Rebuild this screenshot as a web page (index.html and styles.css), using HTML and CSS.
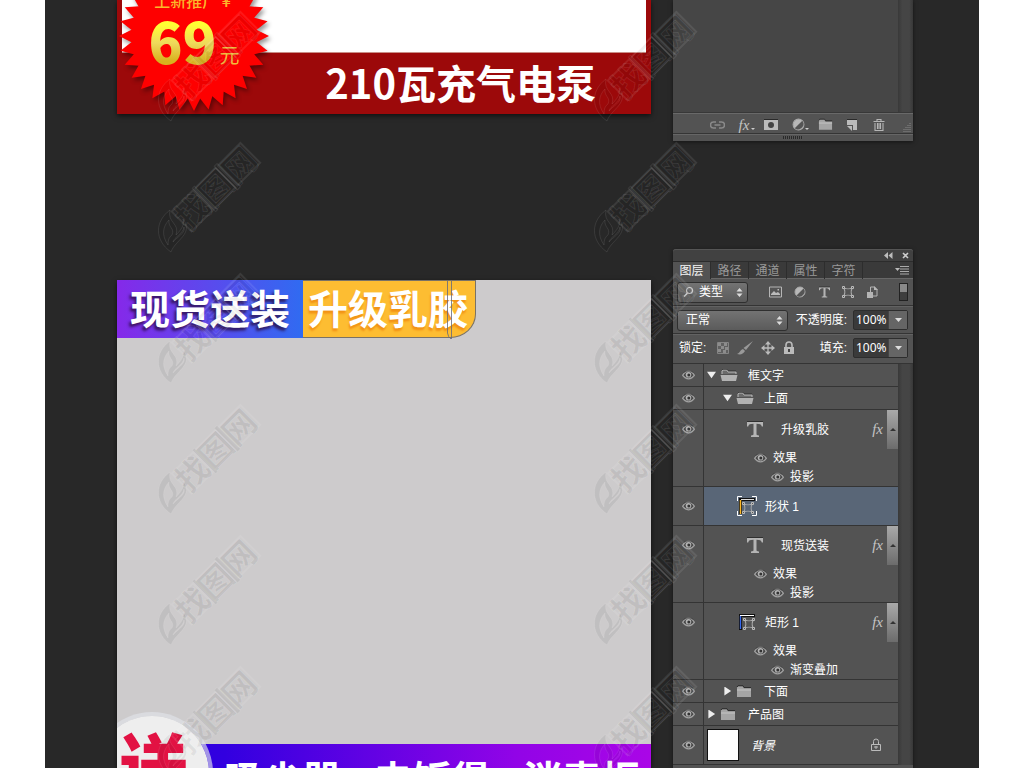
FILE: index.html
```html
<!DOCTYPE html>
<html lang="zh-CN">
<head>
<meta charset="utf-8">
<title>图层</title>
<link rel="stylesheet" href="styles.css">
</head>
<body>
<svg class="sprite" aria-hidden="true">
  <defs>
    <symbol id="eye" viewBox="0 0 13 10"><path d="M.7 5.400C2.600 2 4.400 1.200 6.500 1.200S10.600 2 12.300 5.400C10.600 8 8.800 8.800 6.500 8.800S2.500 8 .7 5.400Z" fill="#454545" stroke="#a0a0a0" stroke-width="1.300"/><circle cx="6.500" cy="4.800" r="2.800" fill="#b4b4b4"/><circle cx="6.800" cy="5" r="1.500" fill="#333"/><path d="M1 3.300C3 .2 10 .2 12 3.300" fill="none" stroke="#2d2d2d" stroke-width=".6"/></symbol>
    <symbol id="folder" viewBox="0 0 16 13"><path d="M1 12V2.500L2 1h5l1 2h7v9Z" fill="#a5a5a5"/><path d="M1 2 2 .8h5L8 2.600h7" fill="none" stroke="#2a2a2a"/><path d="M1 4h14v2H1z" fill="#b5b5b5"/></symbol>
    <symbol id="open" viewBox="0 0 18 13"><path d="M2 5V2l1-1h4l1 2h8v2" fill="#6b6b6b" stroke="#bbb"/><path d="M2 1 3 .3h4l1 1.500h8" fill="none" stroke="#2a2a2a" stroke-width=".6"/><path d="M.5 6h17L16 12H2Z" fill="#b2b2b2"/></symbol>
    <symbol id="tee" viewBox="0 0 16 16"><path d="M0 1h16v4.500h-1.200C14.300 3.300 13 2.700 9.500 2.700V13c0 1 .7 1.300 2.500 1.400V16H4v-1.600C5.800 14.300 6.500 14 6.500 13V2.700C3 2.700 1.700 3.300 1.200 5.500H0Z" fill="#b4b4b4"/><path d="M0 .5h16" stroke="#303030"/></symbol>
    <symbol id="node" viewBox="0 0 12 12"><path d="M2 2C4 3 8 3 10 2C9 4 9 8 10 10C8 9 4 9 2 10C3 8 3 4 2 2Z" fill="none" stroke="#aaa" stroke-width="1.200"/><path d="M.5 .5h2v2h-2zM9.500 .5h2v2h-2zM.5 9.500h2v2h-2zM9.500 9.500h2v2h-2z" fill="#555" stroke="#bbb"/></symbol>
    <symbol id="half" viewBox="0 0 12 12"><circle cx="6" cy="6" r="5" fill="#b8b8b8" stroke="#a8a8a8"/><path d="M9.500 2.500A5 5 0 0 1 2.500 9.500Z" fill="#555"/></symbol>
    <symbol id="lock" viewBox="0 0 12 14"><path d="M3 7V4a3 3 0 0 1 6 0v3" fill="none" stroke="#bbb" stroke-width="1.600"/><rect x="1" y="6" width="10" height="7" fill="#bbb"/><path d="M6 8v3" stroke="#444" stroke-width="2"/></symbol>
    <symbol id="mark" viewBox="0 0 110 120">
      <g stroke="#fff" stroke-opacity=".09" fill="#000" fill-opacity=".06">
        <path fill-rule="evenodd" d="M14 116C-3 104-2 85 13 74C10 87 23 87 19 99C27 91 27 87 26 83C37 98 18 104 14 116ZM11 109C4 99 6 90 12 84C11 92 18 92 15 99C12 101 11 104 11 109ZM16 106C17 101 26 98 27 91C29 97 20 101 16 106Z"/>
        <g transform="translate(36 94) rotate(-45)">
          <path d="M-2 0V-28H28V0ZM30 0V-28H60V0ZM63 0V-28H95V0Z" fill="none" stroke-width="2"/>
          <path d="M60-30h4V3h-4zM29-30h3V3h-3z"/>
          <text class="mark-text" x="-4" y="-1">找图网</text>
        </g>
      </g>
    </symbol>
  </defs>
</svg>

<main class="workspace">
  <section class="boards">
    <article class="board board-red">
      <div class="photo"></div>
      <h2 class="pump">210瓦充气电泵</h2>
      <div class="burst">
        <svg class="burst-shape" viewBox="-80 -80 160 160" aria-hidden="true">
          <defs>
            <path id="spike" d="M56-8 62-6.500 75 0 62 6.500 56 8Z"/>
            <g id="spikes"><use href="#spike"/><use href="#spike" transform="rotate(11.25)"/><use href="#spike" transform="rotate(22.5)"/><use href="#spike" transform="rotate(33.75)"/></g>
            <g id="quarter"><use href="#spikes"/><use href="#spikes" transform="rotate(45)"/></g>
          </defs>
          <g fill="#fe0000"><circle r="62"/><use href="#quarter"/><use href="#quarter" transform="rotate(90)"/><use href="#quarter" transform="rotate(180)"/><use href="#quarter" transform="rotate(270)"/></g>
        </svg>
        <p class="burst-top">上新推广 ¥</p>
        <p class="burst-price"><strong>69</strong><span>元</span></p>
      </div>
    </article>
    <article class="board board-grey">
      <div class="tags">
        <span class="tag tag-blue">现货送装</span>
        <span class="tag tag-gold">升级乳胶
          <svg class="tag-path" viewBox="0 0 30 58" aria-hidden="true"><path d="M1.500 0V52Q2 56 5 58M5.500 0V58" fill="none" stroke="#62677c" stroke-width=".8"/></svg>
        </span>
      </div>
      <div class="gift-bar"><span>吸尘器</span><span>电饭煲</span><span>消毒柜</span></div>
      <div class="gift"><span>送</span></div>
    </article>
  </section>

  <aside class="panels">
    <section class="panel panel-upper">
      <div class="panel-body"><div class="track"></div></div>
      <footer class="tools">
        <button class="tool" aria-label="链接图层"><svg width="15" height="14" viewBox="0 0 15 14"><path d="M6 4H3.500a3 3 0 0 0 0 6H6M9 4h2.500a3 3 0 0 1 0 6H9M4.500 7h6" fill="none" stroke="#8a8a8a" stroke-width="1.500"/></svg></button>
        <button class="tool fx" aria-label="图层样式">fx<i class="dot"></i></button>
        <button class="tool" aria-label="添加蒙版"><svg width="14" height="14" viewBox="0 0 14 14"><path d="M0 2h14v10H0z" fill="#bbb"/><path d="M0 1.500h14" stroke="#2a2a2a"/><circle cx="7" cy="7" r="3" fill="#444"/></svg></button>
        <button class="tool" aria-label="调整图层"><svg width="13" height="13"><use href="#half"/></svg><i class="dot"></i></button>
        <button class="tool" aria-label="新建组"><svg width="15" height="13"><use href="#folder"/></svg></button>
        <button class="tool" aria-label="新建图层"><svg width="14" height="14" viewBox="0 0 14 14"><path d="M2 2h10v10H8V7H2Z" fill="#bbb"/><path d="M2 1.500h10" stroke="#2a2a2a"/><path d="M2 8h5v5Z" fill="#bbb"/></svg></button>
        <button class="tool" aria-label="删除"><svg width="14" height="14" viewBox="0 0 14 14"><path d="M1.500 3.500h11M5 3V1.500h4V3M3 5v7.500h8V5M5.500 5v6M7 5v6M8.500 5v6" fill="none" stroke="#b5b5b5" stroke-width="1.100"/></svg></button>
        <svg class="grip" width="10" height="10" viewBox="0 0 10 10"><path d="M8 1v9M6 3v7M4 5v5M2 7v3" stroke="#888" stroke-dasharray="1 1"/></svg>
      </footer>
      <div class="resize"><i></i></div>
    </section>

    <section class="panel panel-layers">
      <header class="title">
        <button aria-label="折叠"><svg width="9" height="7" viewBox="0 0 9 7"><path d="M4 0v7L0 3.500ZM8.500 0v7l-4-3.500Z" fill="#bdbdbd"/></svg></button>
        <button aria-label="关闭"><svg width="7" height="7" viewBox="0 0 7 7"><path d="m1 1 5 5M6 1 1 6" stroke="#ccc" stroke-width="1.600"/></svg></button>
      </header>
      <nav class="tabs">
        <button class="tab tab-on">图层</button><button class="tab">路径</button><button class="tab">通道</button><button class="tab">属性</button><button class="tab">字符</button>
        <button class="menu" aria-label="菜单"><svg width="14" height="9" viewBox="0 0 14 9"><path d="M0 2h5L2.500 5Z" fill="#bbb"/><path d="M5 .5h9M5 3h9M5 5.500h9M5 8h9" stroke="#aaa"/></svg></button>
      </nav>
      <div class="bar filter">
        <div class="pick pick-kind">
          <svg width="11" height="12" viewBox="0 0 11 12"><circle cx="6.500" cy="4.500" r="3" fill="none" stroke="#ccc" stroke-width="1.200"/><path d="M4.500 7 1 10.500" stroke="#ccc" stroke-width="1.500"/></svg>
          <select aria-label="过滤类型"><option>类型</option></select>
          <svg width="7" height="9" viewBox="0 0 7 9"><path d="M3.500 0 6.500 3.500h-6ZM3.500 9l3-3.500h-6Z" fill="#ddd"/></svg>
        </div>
        <div class="kinds">
          <button aria-label="像素"><svg width="13" height="12" viewBox="0 0 13 12"><path d="M.5 1h12v10H.5z" fill="#555" stroke="#b5b5b5"/><path d="M2 9V8l3-3 2 2 2-1 2 2v1ZM8.500 3h1.500v1.500H8.500z" fill="#bbb"/></svg></button>
          <button aria-label="调整"><svg width="12" height="12"><use href="#half"/></svg></button>
          <button aria-label="文字"><svg width="11" height="12"><use href="#tee"/></svg></button>
          <button aria-label="形状"><svg width="12" height="12"><use href="#node"/></svg></button>
          <button aria-label="智能对象"><svg width="12" height="13" viewBox="0 0 12 13"><path d="M4.500 6V1h4L11 3.500V10H7" fill="#555" stroke="#b5b5b5"/><path d="M8 0v4h4M1 6h6v6H1z" fill="#b5b5b5"/></svg></button>
        </div>
        <button class="switch" aria-label="过滤开关"></button>
      </div>
      <div class="bar">
        <div class="pick pick-mode">
          <select aria-label="混合模式"><option>正常</option></select>
          <svg width="7" height="9" viewBox="0 0 7 9"><path d="M3.500 0 6.500 3.500h-6ZM3.500 9l3-3.500h-6Z" fill="#ddd"/></svg>
        </div>
        <label class="end" for="opacity">不透明度:</label>
        <span class="number"><input id="opacity" value="100%"><button aria-label="调整不透明度"><svg width="7" height="4"><path d="M0 0h7L3.500 4Z" fill="#ddd"/></svg></button></span>
      </div>
      <div class="bar bar-lock">
        <span>锁定:</span>
        <div class="locks">
          <button aria-label="透明像素"><svg width="12" height="12" viewBox="0 0 12 12"><path d="M.5 .5h11v11H.5z" fill="#606060" stroke="#858585"/><path d="M1 1h3v3H1zM7 1h3v3H7zM4 4h3v3H4zM8 5h3v3H8zM1 7h3v3H1zM6 8h3v3H6z" fill="#8c8c8c"/></svg></button>
          <button aria-label="图像像素"><svg width="16" height="14" viewBox="0 0 16 14"><path d="M16 0 9 9 6.500 7ZM6 8l2 2c-2 3-4 4-8 3 3-1 3-4 6-5Z" fill="#999"/></svg></button>
          <button aria-label="位置"><svg width="14" height="14" viewBox="0 0 14 14"><path d="M7 1v12M1 7h12" stroke="#bbb" stroke-width="1.300"/><path d="m7 0 3 3.500H4ZM7 14l3-3.500H4ZM0 7l3.500-3v6ZM14 7l-3.500-3v6Z" fill="#bbb"/></svg></button>
          <button aria-label="全部"><svg width="12" height="14"><use href="#lock"/></svg></button>
        </div>
        <label class="end" for="fill">填充:</label>
        <span class="number"><input id="fill" value="100%"><button aria-label="调整填充"><svg width="7" height="4"><path d="M0 0h7L3.500 4Z" fill="#ddd"/></svg></button></span>
      </div>
      <div class="scroller">
        <ul class="layers">
          <li class="layer"><button class="eye" aria-label="可见"><svg><use href="#eye"/></svg></button><div class="info"><div class="line"><i class="arrow down"></i><svg class="ico" width="18" height="13"><use href="#open"/></svg><span class="name">框文字</span></div></div></li>
          <li class="layer"><button class="eye" aria-label="可见"><svg><use href="#eye"/></svg></button><div class="info"><div class="line nested"><i class="arrow down"></i><svg class="ico" width="18" height="13"><use href="#open"/></svg><span class="name">上面</span></div></div></li>
          <li class="layer tall"><button class="eye" aria-label="可见"><svg><use href="#eye"/></svg></button><div class="info"><div class="line item"><svg width="16" height="16"><use href="#tee"/></svg><span class="name">升级乳胶</span><span class="fx">fx</span><button class="fold" aria-label="折叠效果"></button></div><div class="effect"><svg><use href="#eye"/></svg>效果</div><div class="effect effect-sub"><svg><use href="#eye"/></svg>投影</div></div></li>
          <li class="layer tall selected"><button class="eye" aria-label="可见"><svg><use href="#eye"/></svg></button><div class="info"><div class="line shape"><svg width="20" height="20" viewBox="0 0 20 20"><path d="M.5 5V.5H5M15 .5h4.500V5M.5 15v4.500H5M15 19.500h4.500V15" fill="none" stroke="#fff"/><path d="M2 2h16v3H5v13H2z" fill="#111"/><path d="M3.500 4v14" stroke="#fbb829" stroke-width="1.500"/><path d="M4 3.500h13" stroke="#ddd"/><use href="#node" x="5" y="6" width="12" height="12"/></svg><span class="name">形状 1</span></div></div></li>
          <li class="layer tall"><button class="eye" aria-label="可见"><svg><use href="#eye"/></svg></button><div class="info"><div class="line item"><svg width="16" height="16"><use href="#tee"/></svg><span class="name">现货送装</span><span class="fx">fx</span><button class="fold" aria-label="折叠效果"></button></div><div class="effect"><svg><use href="#eye"/></svg>效果</div><div class="effect effect-sub"><svg><use href="#eye"/></svg>投影</div></div></li>
          <li class="layer tall"><button class="eye" aria-label="可见"><svg><use href="#eye"/></svg></button><div class="info"><div class="line shape"><svg width="20" height="20" viewBox="0 0 20 20"><path d="M2 2h16v3H5v13H2z" fill="#111"/><path d="M3.500 4v13" stroke="#3569f0" stroke-width="1.300"/><path d="M3 3.500h14" stroke="#fff"/><use href="#node" x="6" y="6" width="12" height="12"/></svg><span class="name">矩形 1</span><span class="fx">fx</span><button class="fold" aria-label="折叠效果"></button></div><div class="effect"><svg><use href="#eye"/></svg>效果</div><div class="effect effect-sub"><svg><use href="#eye"/></svg>渐变叠加</div></div></li>
          <li class="layer"><button class="eye" aria-label="可见"><svg><use href="#eye"/></svg></button><div class="info"><div class="line nested"><i class="arrow right"></i><svg class="ico" width="16" height="13"><use href="#folder"/></svg><span class="name">下面</span></div></div></li>
          <li class="layer"><button class="eye" aria-label="可见"><svg><use href="#eye"/></svg></button><div class="info"><div class="line"><i class="arrow right"></i><svg class="ico" width="16" height="13"><use href="#folder"/></svg><span class="name">产品图</span></div></div></li>
          <li class="layer tall"><button class="eye" aria-label="可见"><svg><use href="#eye"/></svg></button><div class="info"><div class="line base"><i class="thumb"></i><span class="name"><em>背景</em></span><svg class="base-lock" width="12" height="14" viewBox="0 0 12 14"><path d="M3.500 6V3.500a2.500 2.500 0 0 1 5 0V6" fill="none" stroke="#bbb"/><path d="M1.500 6.500h9v6h-9zM4 9h4M6 8v3" fill="none" stroke="#bbb"/></svg></div></div></li>
        </ul>
        <div class="track"></div>
      </div>
    </section>
  </aside>

  <div class="marks" aria-hidden="true">
    <div><svg><use href="#mark"/></svg><svg><use href="#mark"/></svg><svg><use href="#mark"/></svg><svg><use href="#mark"/></svg><svg><use href="#mark"/></svg><svg><use href="#mark"/></svg></div>
    <div><svg><use href="#mark"/></svg><svg><use href="#mark"/></svg><svg><use href="#mark"/></svg><svg><use href="#mark"/></svg><svg><use href="#mark"/></svg><svg><use href="#mark"/></svg></div>
  </div>
</main>
</body>
</html>
```
FILE: styles.css
```css
* { box-sizing: border-box; }
body, h2, p, ul { margin: 0; padding: 0; }
body {
  background: #fff;
  color: #fff;
  font: 12px/18px "Liberation Sans", "Noto Sans CJK SC", sans-serif;
}
button, input, select {
  margin: 0; padding: 0; border: 0; background: none;
  color: inherit; font: inherit; border-radius: 0;
}
button { display: flex; align-items: center; justify-content: center; }
svg { display: block; flex: none; }
.sprite { position: absolute; width: 0; height: 0; }

.workspace {
  position: relative;
  display: grid;
  grid-template-columns: 1fr 240px;
  gap: 22px;
  height: 100vh;
  margin: 0 45px;
  padding: 0 66px 0 72px;
  overflow: hidden;
  background: #282828;
}

/* Artboards */
.boards { display: flex; flex-direction: column; gap: 166px; min-height: 0; font-family: "Noto Sans CJK SC", sans-serif; }
.board { position: relative; box-shadow: 0 2px 5px rgba(0, 0, 0, .6); }
.board-red { background: #9c090a; padding: 0 5px; }
.photo { height: 53px; background: #fff; border-bottom: 1px solid #c98e87; }
.pump {
  padding: 0 50px 3px 0;
  text-align: right;
  font-size: 40px;
  line-height: 58px;
  font-weight: 700;
}
.burst { position: absolute; left: -3px; top: -44px; width: 160px; text-align: center; }
.burst-shape { position: absolute; inset: 0; width: 160px; filter: drop-shadow(2px 3px 2px rgba(0, 0, 0, .4)); }
.burst-top { position: relative; padding: 34px 3px 0 0; font-size: 16px; line-height: 20px; font-weight: 500; color: #fbb62c; }
.burst-price { position: relative; display: flex; justify-content: center; align-items: flex-end; gap: 3px; height: 60px; color: #f3bd3b; }
.burst-price strong {
  font-size: 56px; line-height: 60px; font-weight: 900;
  background: linear-gradient(#ff3 25%, #efd95c 55%, #d8b21e 85%);
  -webkit-background-clip: text; background-clip: text; color: transparent;
}
.burst-price span { font-size: 20px; line-height: 30px; }

.board-grey { flex: 1; display: flex; flex-direction: column; justify-content: space-between; background: #cdcbcc; overflow: hidden; }
.tags { display: flex; }
.tag { font-size: 40px; line-height: 54px; height: 58px; font-weight: 700; }
.tag-blue { padding: 0 13px; background: linear-gradient(90deg, #8529e9, #306bf1); text-shadow: -2px 3px 3px rgba(40, 10, 60, .8); }
.tag-gold { position: relative; padding: 0 7px 0 5px; background: #fdbd32; border: 1px solid #7a7265; border-left: 0; border-bottom-right-radius: 26px 24px; line-height: 52px; text-shadow: -1px 3px 2px #f29316; }
.tag-path { position: absolute; right: -1px; top: 0; width: 30px; height: 58px; }
.gift-bar {
  display: flex; justify-content: space-between;
  height: 24px; padding: 8px 11px 0 107px;
  background: linear-gradient(90deg, #2400df, #3200e0 20%, #9204e7 75%, #aa06e7);
  font-size: 39px; line-height: 50px; font-weight: 700;
}
.gift {
  position: absolute; left: -26px; bottom: -66px;
  width: 122px; height: 122px; padding: 0 0 0 24px;
  border: 4px solid rgba(225, 228, 234, .65); border-radius: 50%;
  background: #eee; background-clip: padding-box;
  color: #e21243; font-size: 70px; line-height: 94px; font-weight: 900;
}

/* Panels */
.panels { display: flex; flex-direction: column; gap: 108px; min-height: 0; }
.panel { box-shadow: 0 1px 4px rgba(0, 0, 0, .5); background: #535353; }
.panel-body { display: flex; justify-content: flex-end; height: 113px; background: #464646; border-bottom: 1px solid #383838; }
.track { flex: none; width: 15px; background: linear-gradient(90deg, #393939, #454545 30%, #454545 75%, #383838); }
.tools { position: relative; display: flex; justify-content: flex-end; gap: 7px; height: 20px; padding: 2px 24px 0 0; border-top: 1px solid #696969; }
.tool { position: relative; width: 20px; }
.dot { position: absolute; right: -1px; bottom: 3px; border: 2px solid transparent; border-top-color: #ccc; border-bottom: 0; }
.grip { position: absolute; right: 1px; bottom: 1px; }
.resize { display: flex; justify-content: center; align-items: center; height: 8px; border-top: 1px solid #353535; box-shadow: inset 0 1px #666; }
.resize i { width: 20px; height: 3px; background: repeating-linear-gradient(90deg, #2a2a2a 0 1px, #555 1px 2px); }
.fx { font: italic 15px/16px "Liberation Serif", serif; color: #c4c4c4; }

.panel-layers { flex: 1; border-radius: 3px 3px 0 0; }
.title { display: flex; justify-content: flex-end; align-items: center; gap: 9px; height: 12px; padding-right: 4px; background: #414141; border-radius: 3px 3px 0 0; border-top: 1px solid #555; }
.tabs { display: flex; height: 18px; background: #3a3a3a; border-top: 1px solid #2c2c2c; border-bottom: 1px solid #686868; }
.tab { width: 38px; height: 17px; color: #999; border-right: 1px solid #2d2d2d; }
.tab-on { color: #f5f5f5; background: #535353; }
.menu { margin-left: auto; padding-right: 4px; }
.bar { display: flex; align-items: center; height: 28px; padding: 0 5px 0 4px; border-bottom: 1px solid #343434; border-top: 1px solid #626262; }
.filter { height: 27px; border-top: 0; }
.bar-lock { height: 29px; border-bottom: 0; padding: 0 5px 2px 6px; }
.pick { display: flex; align-items: center; height: 21px; padding: 0 4px 0 8px; border: 1px solid #2f2f2f; border-radius: 3px; background: linear-gradient(#737373, #5b5b5b); }
.pick select { flex: 1; min-width: 0; height: 19px; appearance: none; }
.pick-kind { width: 71px; padding-left: 5px; gap: 5px; }
.pick-mode { width: 111px; }
.kinds { display: flex; justify-content: space-between; width: 109px; margin-left: 21px; }
.switch { width: 9px; height: 18px; margin-left: auto; border: 1px solid #222; background: linear-gradient(#888 50%, #3e3e3e 50%); }
.end { margin-left: auto; padding-right: 6px; }
.number { display: flex; height: 20px; border: 1px solid #2d2d2d; border-radius: 2px; background: #3a3a3a; }
.number input { width: 34px; padding-left: 2px; font: 12px/18px "Noto Sans", sans-serif; }
.number button { width: 19px; background: #656565; border-left: 1px solid #444; }
.locks { display: flex; align-items: center; gap: 8px; margin-left: 11px; }

.scroller { display: flex; background: #464646; border-top: 1px solid #343434; }
.layers { flex: 1; list-style: none; background: #535353; }
.layer { display: grid; grid-template-columns: 30px 1fr; border-bottom: 1px solid #343434; }
.eye { height: 22px; }
.tall .eye { height: 38px; }
.eye svg, .effect svg { width: 13px; height: 10px; }
.info { border-left: 1px solid #343434; }
.line { display: flex; align-items: center; height: 22px; padding-left: 3px; }
.tall .line { height: 38px; }
.nested { padding-left: 19px; }
.ico { margin-left: 4px; }
.arrow { width: 9px; height: 9px; background: #eee; }
.down { clip-path: polygon(0 15%, 100% 15%, 50% 85%); }
.right { clip-path: polygon(15% 0, 90% 50%, 15% 100%); }
.name { padding-top: 2px; }
.ico + .name { margin-left: auto; width: calc(100% - 41px); }
.tall .item { padding-left: 43px; }
.item .name { margin-left: 18px; }
.shape { padding-left: 33px; }
.shape .name { margin-left: 8px; }
.line .fx { margin-left: auto; padding-right: 4px; }
.fold { align-self: flex-start; width: 11px; height: 39px; background: linear-gradient(#a9a9a9, #6c6c6c); }
.fold::before { content: ""; border: 3px solid transparent; border-top: 0; border-bottom-color: #333; }
.effect { display: flex; align-items: center; gap: 6px; height: 19px; padding: 1px 0 0 50px; }
.effect-sub { padding-left: 67px; }
.selected .info { background: #596677; }
.thumb { width: 32px; height: 32px; border: 1px solid #111; background: #fff; }
.base .name { margin-left: 12px; }
.base-lock { margin-left: auto; margin-right: 16px; }

/* Repeated diagonal mark */
.marks { position: absolute; inset: 5px 282px 0 112px; display: flex; justify-content: space-between; pointer-events: none; }
.marks div { display: flex; flex-direction: column; gap: 11px; width: 110px; margin-right: -6px; }
.marks svg { width: 110px; height: 120px; }
.mark-text { font: 700 33px "Noto Sans CJK SC", sans-serif; }
```
